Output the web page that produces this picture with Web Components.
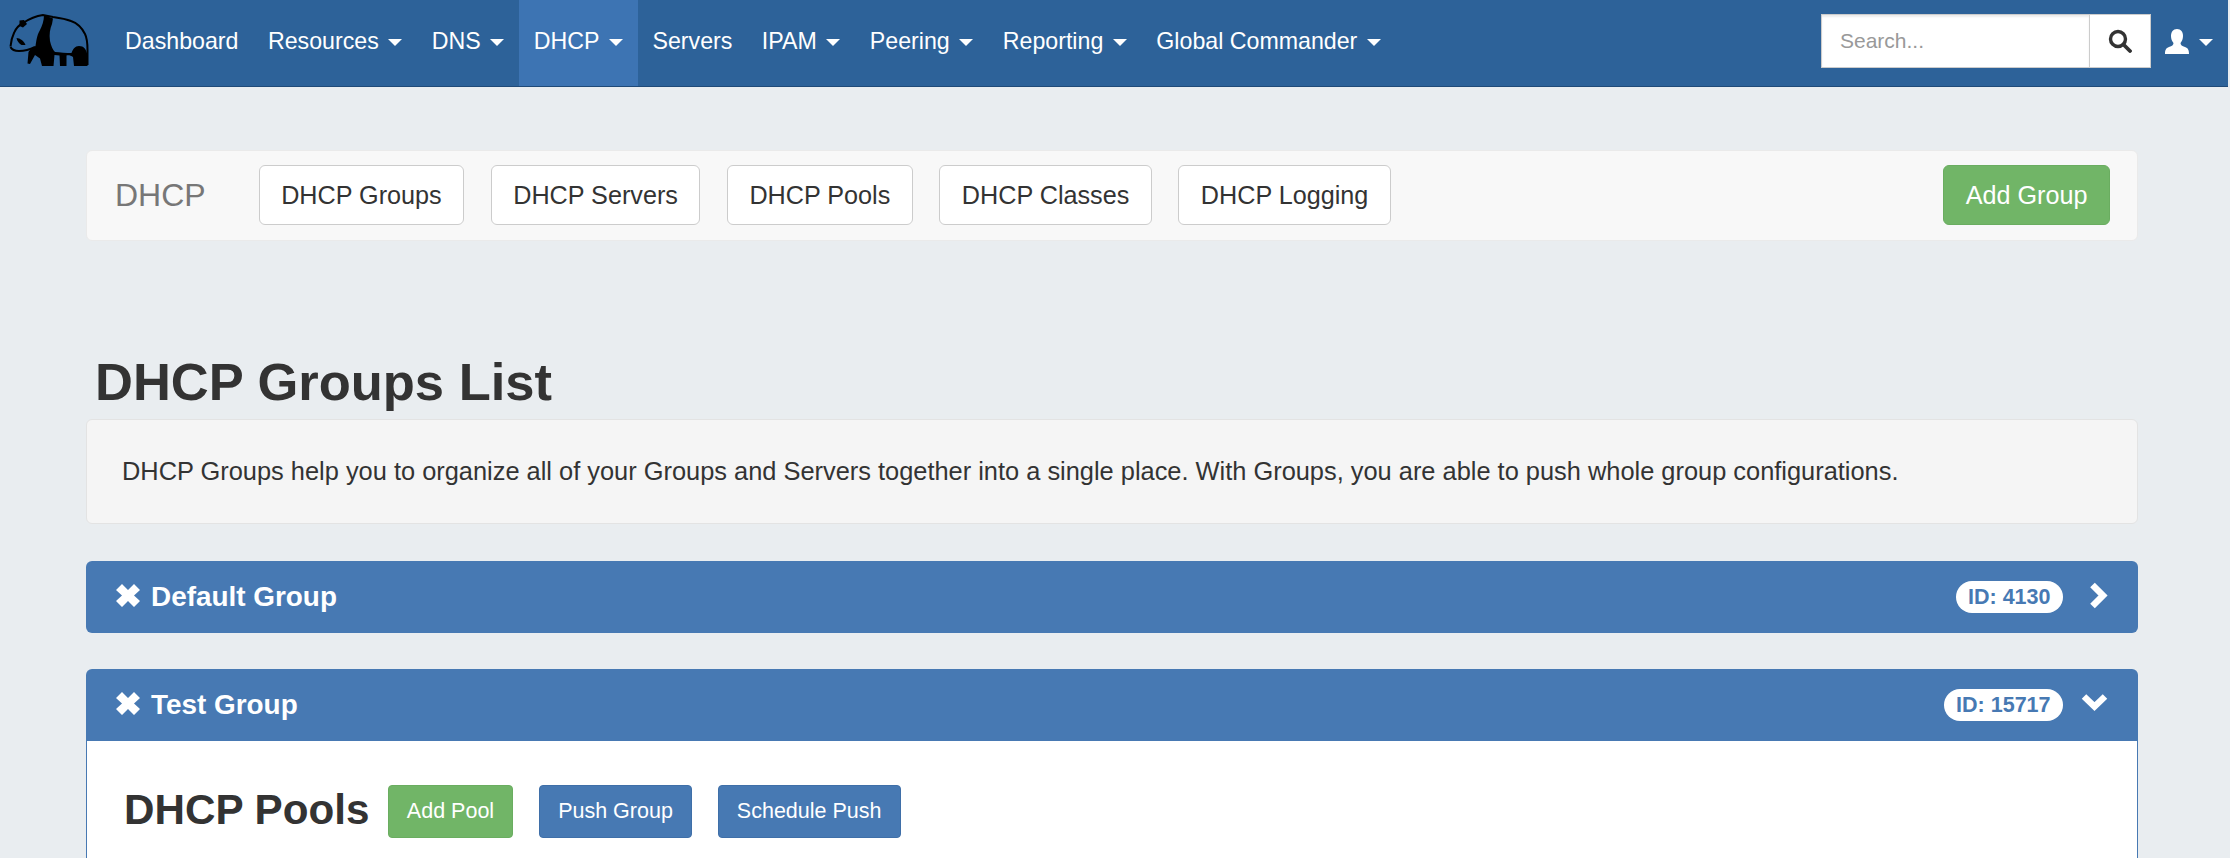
<!DOCTYPE html>
<html>
<head>
<meta charset="utf-8">
<title>DHCP Groups</title>
<style>
html, body {
  margin: 0;
  height: 100%;
  overflow: hidden;
}
body {
  background: #e9edf0;
  color: #333;
  font-family: "Liberation Sans", Arial, sans-serif;
}
</style>
</head>
<body>

<app-navbar>
  <nav-item>Dashboard</nav-item>
  <nav-item caret>Resources</nav-item>
  <nav-item caret>DNS</nav-item>
  <nav-item caret active>DHCP</nav-item>
  <nav-item>Servers</nav-item>
  <nav-item caret>IPAM</nav-item>
  <nav-item caret>Peering</nav-item>
  <nav-item caret>Reporting</nav-item>
  <nav-item caret>Global Commander</nav-item>
</app-navbar>

<page-main>
  <sub-nav label="DHCP">
    <ui-button>DHCP Groups</ui-button>
    <ui-button>DHCP Servers</ui-button>
    <ui-button>DHCP Pools</ui-button>
    <ui-button>DHCP Classes</ui-button>
    <ui-button>DHCP Logging</ui-button>
    <ui-button slot="action" kind="green">Add Group</ui-button>
  </sub-nav>

  <page-title>DHCP Groups List</page-title>

  <info-well>DHCP Groups help you to organize all of your Groups and Servers together into a single place. With Groups, you are able to push whole group configurations.</info-well>

  <group-panel name="Default Group" group-id="4130"></group-panel>

  <group-panel name="Test Group" group-id="15717" open>
    <section-head>
      DHCP Pools
      <ui-button slot="actions" kind="green" small>Add Pool</ui-button>
      <ui-button slot="actions" kind="blue" small>Push Group</ui-button>
      <ui-button slot="actions" kind="blue" small>Schedule Push</ui-button>
    </section-head>
  </group-panel>
</page-main>

<script>
// small helper, every element below does the same thing in its constructor
function shadow(el, html) {
  el.attachShadow({ mode: 'open' }).innerHTML = html;
}

class AppNavbar extends HTMLElement {
  constructor() {
    super();
    shadow(this, `
<style>
:host {
  display: flex;
  align-items: stretch;
  height: 86px;
  margin-right: 2px;
  background: #2d6299;
  border-bottom: 1px solid #1f4a78;
}
.logo { width: 110px; height: 86px; flex: none; display: block; }
.links { display: flex; padding-left: 0.25px; }
.right { margin-left: auto; display: flex; align-items: center; padding: 0 15px 4px 0; }
.search { display: flex; height: 54px; width: 330px; box-sizing: border-box; margin-right: 14px; background: #fff; border: 1px solid #ccc; }
.search input {
  flex: 1; min-width: 0; border: 0; outline: 0; padding: 0 18px;
  font: 21px "Liberation Sans", Arial, sans-serif; color: #333; background: transparent;
  box-shadow: inset 0 2px 2px rgba(0,0,0,.075);
}
.search input::placeholder { color: #999; opacity: 1; }
.search span { width: 60px; border-left: 1px solid #ccc; display: flex; align-items: center; justify-content: center; }
.user { display: flex; align-items: center; }
.user i { display: block; margin-left: 10px; border: solid transparent; border-width: 7px 7px 0; border-top-color: #fff; margin-top: 3px; }
</style>
<svg class="logo" viewBox="0 0 110 86">
  <path d="M10.500 46.500C11 41 12 37 14 33C16 28 19 25 23 23C29 19 36 16 43 15L53 17C60 18 66 19 71 21C77 23 82 28 85 34C87 38 87.500 43 87.500 50L87.500 65" fill="none" stroke="#000" stroke-width="2"/>
  <path d="M10.500 47C12 50 15 51 19 51C24 51 29 50 35 47" fill="none" stroke="#000" stroke-width="2"/>
  <path d="M44 15L53 18.500L52 24C50 29 49 34 50 41C51 46 53 50 55 52C60 52.500 66 53 71.500 53C73 49 75 46 79 46C84 46 86 49 87.500 55L87.500 66L74 66L73 57C71 55.500 68.500 55 66.500 55.500L66.500 66L60 66L59.500 55.500L54.500 55L53.500 66L42 66L40 58.500L35 55L30 64L27.500 63.500L28.500 52C31 48.500 34 47.500 35.500 46C36.500 41 36.500 36 40 30C42 26 44 21 44 15Z" fill="#000"/>
  <path d="M19.500 20.500L24 20L27 24L23 27.500L19.500 26Z" fill="#000"/>
  <path d="M16.500 38C20 38 24 41 25.500 45L21.500 45C19 43.500 17 41 16.500 38Z" fill="#000"/>
</svg>
<div class="links"><slot></slot></div>
<div class="right">
  <div class="search">
    <input placeholder="Search...">
    <span><svg width="24" height="24" viewBox="0 0 24 24"><circle cx="10" cy="10" r="7.5" fill="none" stroke="#333" stroke-width="3.4"/><path d="M15.500 15.500L22 22" stroke="#333" stroke-width="3.8" stroke-linecap="round"/></svg></span>
  </div>
  <div class="user">
    <svg width="24" height="25" viewBox="0 0 24 25"><path d="M12 0C16 0 18 3 18 7C18 10 17 12 15.500 14C15.500 16 17 17 20 18C23 19 24 21 24 25L0 25C0 21 1 19 4 18C7 17 8.500 16 8.500 14C7 12 6 10 6 7C6 3 8 0 12 0Z" fill="#fff"/></svg>
    <i></i>
  </div>
</div>`);
  }
}

class NavItem extends HTMLElement {
  constructor() {
    super();
    shadow(this, `
<style>
:host {
  display: flex;
  align-items: center;
  padding: 0 14.750px 3px;
  color: #fff;
  font-size: 23.2px;
  white-space: nowrap;
}
:host([active]) { background: #3d74b3; }
i { display: none; margin-left: 9.500px; margin-top: 2px; border: solid transparent; border-width: 7px 7px 0; border-top-color: #fff; }
:host([caret]) i { display: block; }
</style>
<slot></slot><i></i>`);
  }
}

class PageMain extends HTMLElement {
  constructor() {
    super();
    shadow(this, `
<style>
:host { display: block; margin: 63px 92px 0 86px; }
</style>
<slot></slot>`);
  }
}

class SubNav extends HTMLElement {
  constructor() {
    super();
    shadow(this, `
<style>
:host {
  display: flex;
  align-items: center;
  height: 91px;
  box-sizing: border-box;
  padding: 0 27px 1px 28px;
  gap: 26.500px;
  background: #f8f8f8;
  border: 1px solid #eaeaea;
  border-radius: 6px;
}
.brand { font-size: 32px; color: #777; margin-right: 26.500px; }
.push { margin-left: auto; display: flex; }
</style>
<span class="brand">${this.getAttribute('label')}</span>
<slot></slot>
<div class="push"><slot name="action"></slot></div>`);
  }
}

class UiButton extends HTMLElement {
  constructor() {
    super();
    shadow(this, `
<style>
:host {
  display: inline-flex;
  align-items: center;
  justify-content: center;
  box-sizing: border-box;
  height: 60px;
  padding: 0 21.500px;
  font-size: 25.2px;
  color: #333;
  background: #fff;
  border: 1px solid #ccc;
  border-radius: 6px;
  white-space: nowrap;
}
:host([kind="green"]) { background: #71b567; border-color: #6aad60; color: #fff; }
:host([kind="blue"]) { background: #4779b3; border-color: #3f6fa8; color: #fff; }
:host([small]) { height: 53px; padding: 0 18px; font-size: 21.5px; border-radius: 4px; }
</style>
<slot></slot>`);
  }
}

class PageTitle extends HTMLElement {
  constructor() {
    super();
    shadow(this, `
<style>
:host {
  display: block;
  margin: 103px 0 0 9px;
  height: 75px;
  line-height: 75px;
  font-size: 52.5px;
  font-weight: bold;
  color: #333;
}
</style>
<slot></slot>`);
  }
}

class InfoWell extends HTMLElement {
  constructor() {
    super();
    shadow(this, `
<style>
:host {
  display: flex;
  align-items: center;
  height: 105px;
  box-sizing: border-box;
  padding: 0 35px;
  font-size: 25.4px;
  color: #333;
  background: #f5f5f5;
  border: 1px solid #e3e3e3;
  border-radius: 6px;
  margin-bottom: 37px;
}
</style>
<slot></slot>`);
  }
}

class GroupPanel extends HTMLElement {
  constructor() {
    super();
    const open = this.hasAttribute('open');
    const chevron = open
      ? '<svg class="down" width="27" height="19" viewBox="0 0 27 19"><path d="M3 3.500L13.500 13.500L24 3.500" fill="none" stroke="#fff" stroke-width="6.500"/></svg>'
      : '<svg class="side" width="19" height="27" viewBox="0 0 19 27"><path d="M3.500 3L14 13.500L3.500 24" fill="none" stroke="#fff" stroke-width="6.500"/></svg>';
    shadow(this, `
<style>
:host { display: block; margin-bottom: 36px; }
.head {
  display: flex;
  align-items: center;
  height: 72px;
  box-sizing: border-box;
  padding: 0 30px 0 30px;
  background: #4779b3;
  color: #fff;
  border-radius: 6px;
  font-size: 27.9px;
  font-weight: bold;
}
:host([open]) .head { border-radius: 6px 6px 0 0; }
.x { margin-right: 11px; margin-top: -3px; display: block; }
.badge {
  margin-left: auto;
  height: 32px;
  line-height: 32px;
  padding: 0 12.500px;
  border-radius: 16px;
  background: #fff;
  color: #4779b3;
  font-size: 21.5px;
}
.arrow { width: 27px; margin-left: 18px; display: flex; justify-content: flex-end; }
.side { margin-top: -3px; }
.down { margin-top: -5px; }
.body {
  display: none;
  height: 400px;
  box-sizing: border-box;
  padding: 44px 37px;
  background: #fff;
  border: solid #4779b3;
  border-width: 0 1px 1px;
}
:host([open]) .body { display: block; }
</style>
<div class="head">
  <svg class="x" width="24" height="23" viewBox="0 0 24 23"><path d="M6 0L12 6L18 0L24 6L18 11.500L24 17L18 23L12 17L6 23L0 17L6 11.500L0 6Z" fill="#fff"/></svg>
  <span>${this.getAttribute('name')}</span>
  <span class="badge">ID: ${this.getAttribute('group-id')}</span>
  <span class="arrow">${chevron}</span>
</div>
<div class="body"><slot></slot></div>`);
  }
}

class SectionHead extends HTMLElement {
  constructor() {
    super();
    shadow(this, `
<style>
:host {
  display: flex;
  align-items: center;
  font-size: 42.200px;
  font-weight: bold;
  color: #333;
}
span { margin-top: -4px; }
.btns { display: flex; gap: 26px; margin-left: 18.500px; font-weight: normal; }
</style>
<span><slot></slot></span>
<div class="btns"><slot name="actions"></slot></div>`);
  }
}

customElements.define('app-navbar', AppNavbar);
customElements.define('nav-item', NavItem);
customElements.define('page-main', PageMain);
customElements.define('sub-nav', SubNav);
customElements.define('ui-button', UiButton);
customElements.define('page-title', PageTitle);
customElements.define('info-well', InfoWell);
customElements.define('group-panel', GroupPanel);
customElements.define('section-head', SectionHead);
</script>
</body>
</html>
